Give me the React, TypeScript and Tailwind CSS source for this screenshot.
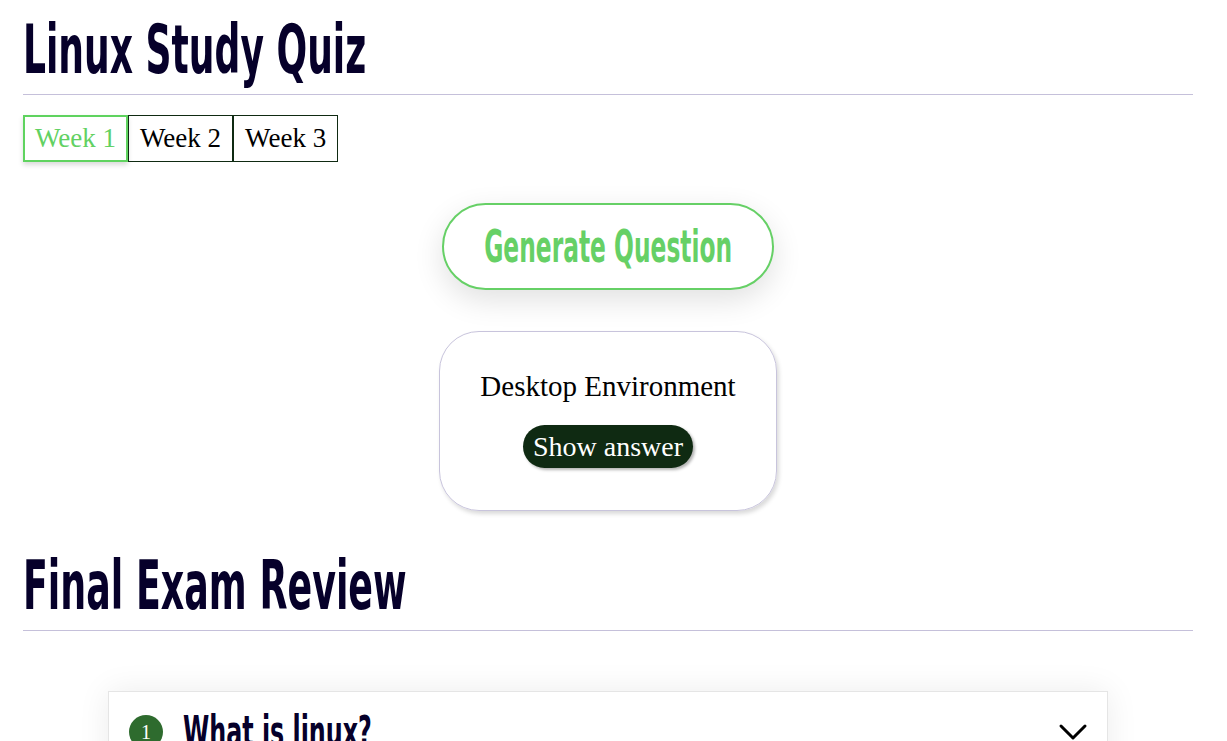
import React, { useState } from 'react';
import { ChevronDown } from 'lucide-react';

const heading = "font-['Liberation_Sans_Narrow','DejaVu_Sans_Condensed',sans-serif] font-bold";
const serif = "font-['Liberation_Serif','DejaVu_Serif',serif]";

const weeks = ['Week 1', 'Week 2', 'Week 3'];

export default function App() {
  const [week, setWeek] = useState(0);

  return (
    <div className={`min-h-screen bg-white pl-[23px] pr-[34px] pt-[15px] text-black ${serif}`}>
      <h1 className={`${heading} text-[68px] leading-[70px] text-[#06002a] origin-left scale-x-[0.59] whitespace-nowrap`}>
        Linux Study Quiz
      </h1>
      <hr className="mt-[9px] border-t border-[#c5c0da]" />

      <div className="mt-[20px] flex">
        {weeks.map((w, i) => (
          <button
            key={w}
            onClick={() => setWeek(i)}
            className={
              i === week
                ? 'h-[47px] px-[10px] text-[27px] text-[#62d162] border-2 border-[#5fd35f] shadow-[0_3px_5px_rgba(0,0,0,0.15)]'
                : 'h-[47px] px-[11px] text-[27px] text-black border border-[#0f2a12]'
            }
          >
            {w}
          </button>
        ))}
      </div>

      <div className="mt-[41px] flex flex-col items-center">
        <button className={`${heading} flex h-[87px] w-[332px] items-center justify-center whitespace-nowrap rounded-full border-2 border-[#66d066] bg-white text-[#66d066] text-[44px] shadow-[0_10px_30px_rgba(0,0,0,0.12)]`}>
          <span className="inline-block shrink-0 scale-x-[0.59]">Generate Question</span>
        </button>

        <div className="mt-[41px] flex h-[180px] w-[338px] flex-col items-center justify-center rounded-[40px] border border-[#c8c4dc] pb-[4px] shadow-[2px_3px_4px_rgba(0,0,0,0.15)]">
          <p className="text-[29px] leading-[32px]">Desktop Environment</p>
          <button className="mt-[23px] h-[43px] whitespace-nowrap rounded-full bg-[#0f2a12] px-[10px] text-[28px] text-white shadow-[2px_2px_3px_rgba(0,0,0,0.3)]">
            Show answer
          </button>
        </div>
      </div>

      <h2 className={`${heading} mt-[40px] text-[68px] leading-[70px] text-[#06002a] origin-left scale-x-[0.595] whitespace-nowrap`}>
        Final Exam Review
      </h2>
      <hr className="mt-[9px] border-t border-[#c5c0da]" />

      <div className="mx-[85px] mt-[60px] border border-[#e5e5e5] bg-white shadow-[0_0_30px_rgba(0,0,0,0.08)]">
        <div className="flex items-center px-[20px] pt-[16px] pb-[22px]">
          <span className="flex h-[34px] w-[34px] shrink-0 items-center justify-center rounded-full bg-[#2e6b2e] text-[20px] text-white">
            1
          </span>
          <span className={`${heading} ml-[20px] text-[42px] leading-[40px] text-[#06002a] origin-left scale-x-[0.63] whitespace-nowrap`}>
            What is linux?
          </span>
          <ChevronDown className="ml-auto -mr-[10px] h-[48px] w-[48px] text-black" strokeWidth={1.5} />
        </div>
        <div className="px-[20px] pb-[20px] text-[20px]">
          Linux is a free, open-source operating system kernel.
        </div>
      </div>
    </div>
  );
}
